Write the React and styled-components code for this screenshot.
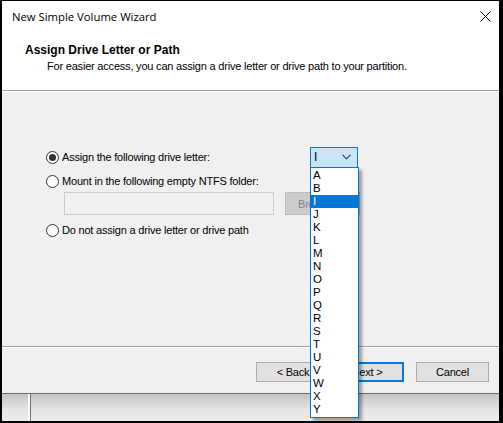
import styled, { createGlobalStyle } from "styled-components";

const GlobalStyle = createGlobalStyle`
  html, body {
    margin: 0;
    padding: 0;
    background: #000;
  }
  * { box-sizing: border-box; }
`;

const Frame = styled.div`
  width: 503px;
  height: 423px;
  background: #000;
  padding: 1px 4px 2px 2px;
  display: flex;
  flex-direction: column;
  font-family: "Liberation Sans", Arial, sans-serif;
  font-size: 11px;
  letter-spacing: -0.2px;
  color: #000;
  overflow: hidden;
`;

const Window = styled.div`
  height: 393px;
  display: flex;
  flex-direction: column;
  background: #f0f0f0;
  border-bottom: 1px solid #6d6d6d;
`;

const TitleBar = styled.div`
  height: 31px;
  background: #fff;
  display: flex;
  align-items: center;
  justify-content: space-between;
  padding: 0 8px 0 10px;
  font-family: "Open Sans", "Noto Sans", sans-serif;
  font-size: 11.3px;
  letter-spacing: 0;
`;

const CloseIcon = styled.svg`
  width: 11px;
  height: 11px;
`;

const Header = styled.div`
  height: 59px;
  background: #fff;
  border-bottom: 1px solid #a0a0a0;
  padding: 11px 0 0 23px;
`;

const HeaderTitle = styled.div`
  font-weight: bold;
  font-size: 12px;
  letter-spacing: 0;
  line-height: 15px;
`;

const HeaderText = styled.div`
  padding-left: 22px;
  line-height: 15px;
  margin-top: 1px;
`;

const Content = styled.div`
  flex: 1;
  border-top: 1px solid #fff;
  border-bottom: 1px solid #a0a0a0;
  padding: 54px 0 0 44px;
  display: flex;
  flex-direction: column;
`;

const Row = styled.div`
  display: flex;
  align-items: center;
  height: 22px;
  margin-top: ${(p) => p.$gap || 0}px;
`;

const Option = styled.label`
  display: flex;
  align-items: center;
  gap: 3px;
  width: 264px;
  white-space: nowrap;
`;

const Radio = styled.span`
  width: 13px;
  height: 13px;
  border-radius: 50%;
  border: 1px solid #333;
  background: #fff;
  display: flex;
  align-items: center;
  justify-content: center;
  &::after {
    content: "";
    width: 7px;
    height: 7px;
    border-radius: 50%;
    background: ${(p) => (p.$checked ? "#333" : "transparent")};
  }
`;

const FolderRow = styled.div`
  display: flex;
  align-items: center;
  gap: 11px;
  padding-left: 18px;
`;

const FolderInput = styled.div`
  width: 210px;
  height: 23px;
  border: 1px solid #cccccc;
  background: #f0f0f0;
`;

const DisabledButton = styled.div`
  width: 75px;
  height: 23px;
  background: #cccccc;
  border: 1px solid #bfbfbf;
  color: #838383;
  display: flex;
  align-items: center;
  padding-left: 12px;
`;

const ComboWrap = styled.div`
  position: relative;
  width: 48px;
`;

const Combo = styled.div`
  height: 21px;
  border: 1px solid #0078d7;
  background: #cce4f7;
  display: flex;
  align-items: center;
  justify-content: space-between;
  padding: 0 6px 0 3px;
  font-size: 12px;
`;

const Chevron = styled.svg`
  width: 9px;
  height: 6px;
`;

const DropList = styled.ul`
  position: absolute;
  top: 20px;
  left: 0;
  width: 49px;
  margin: 0;
  padding: 1px 0;
  list-style: none;
  background: #fff;
  border: 1px solid #0078d7;
  box-shadow: 3px 3px 3px rgba(0, 0, 0, 0.35);
  z-index: 5;
  font-size: 11.5px;
  letter-spacing: 0;
`;

const Item = styled.li`
  height: 13px;
  line-height: 13px;
  padding-left: 2px;
  overflow: hidden;
  background: ${(p) => (p.$selected ? "#0078d7" : "transparent")};
  color: ${(p) => (p.$selected ? "#fff" : "#000")};
`;

const Footer = styled.div`
  height: 46px;
  border-top: 1px solid #fff;
  display: flex;
  justify-content: flex-end;
  padding: 14px 10px 0 0;
`;

const ButtonGroup = styled.div`
  display: flex;
  margin-right: 12px;
`;

const Button = styled.div`
  width: ${(p) => p.$w || 74}px;
  height: 20px;
  background: #e1e1e1;
  border: ${(p) => (p.$default ? "2px solid #0078d7" : "1px solid #adadad")};
  display: flex;
  align-items: center;
  justify-content: center;
`;

const Backdrop = styled.div`
  flex: 1;
  background: linear-gradient(#c4c4c4, #e6e6e6 60%, #ededed);
  display: flex;
  padding-left: 26px;
`;

const Stripe = styled.div`
  width: 3px;
  background: #fafafa;
  border-right: 1px solid #6f6f6f;
`;

const letters = ["A", "B", "I", "J", "K", "L", "M", "N", "O", "P", "Q", "R", "S", "T", "U", "V", "W", "X", "Y"];

export default function App() {
  return (
    <>
      <GlobalStyle />
      <Frame>
        <Window>
          <TitleBar>
            <span>New Simple Volume Wizard</span>
            <CloseIcon viewBox="0 0 11 11">
              <path d="M0.5 0.5 L10.5 10.5 M10.5 0.5 L0.5 10.5" stroke="#000" strokeWidth="1" fill="none" />
            </CloseIcon>
          </TitleBar>
          <Header>
            <HeaderTitle>Assign Drive Letter or Path</HeaderTitle>
            <HeaderText>For easier access, you can assign a drive letter or drive path to your partition.</HeaderText>
          </Header>
          <Content>
            <Row>
              <Option>
                <Radio $checked />
                Assign the following drive letter:
              </Option>
              <ComboWrap>
                <Combo>
                  <span>I</span>
                  <Chevron viewBox="0 0 9 6">
                    <path d="M0.5 0.8 L4.5 4.8 L8.5 0.8" stroke="#333" strokeWidth="1.1" fill="none" />
                  </Chevron>
                </Combo>
                <DropList>
                  {letters.map((l) => (
                    <Item key={l} $selected={l === "I"}>{l}</Item>
                  ))}
                </DropList>
              </ComboWrap>
            </Row>
            <Row $gap={2}>
              <Option>
                <Radio />
                Mount in the following empty NTFS folder:
              </Option>
            </Row>
            <FolderRow>
              <FolderInput />
              <DisabledButton>Browse...</DisabledButton>
            </FolderRow>
            <Row $gap={4}>
              <Option>
                <Radio />
                Do not assign a drive letter or drive path
              </Option>
            </Row>
          </Content>
          <Footer>
            <ButtonGroup>
              <Button>&lt; Back</Button>
              <Button $default>Next &gt;</Button>
            </ButtonGroup>
            <Button $w={73}>Cancel</Button>
          </Footer>
        </Window>
        <Backdrop>
          <Stripe />
        </Backdrop>
      </Frame>
    </>
  );
}
